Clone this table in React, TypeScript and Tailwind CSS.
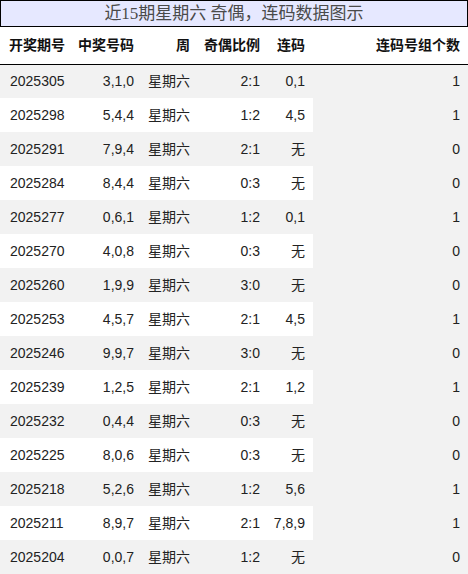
import React from 'react';

type Row = [string, string, string, string, string, string];

const rows: Row[] = [
  ['2025305', '3,1,0', '星期六', '2:1', '0,1', '1'],
  ['2025298', '5,4,4', '星期六', '1:2', '4,5', '1'],
  ['2025291', '7,9,4', '星期六', '2:1', '无', '0'],
  ['2025284', '8,4,4', '星期六', '0:3', '无', '0'],
  ['2025277', '0,6,1', '星期六', '1:2', '0,1', '1'],
  ['2025270', '4,0,8', '星期六', '0:3', '无', '0'],
  ['2025260', '1,9,9', '星期六', '3:0', '无', '0'],
  ['2025253', '4,5,7', '星期六', '2:1', '4,5', '1'],
  ['2025246', '9,9,7', '星期六', '3:0', '无', '0'],
  ['2025239', '1,2,5', '星期六', '2:1', '1,2', '1'],
  ['2025232', '0,4,4', '星期六', '0:3', '无', '0'],
  ['2025225', '8,0,6', '星期六', '0:3', '无', '0'],
  ['2025218', '5,2,6', '星期六', '1:2', '5,6', '1'],
  ['2025211', '8,9,7', '星期六', '2:1', '7,8,9', '1'],
  ['2025204', '0,0,7', '星期六', '1:2', '无', '0'],
];

const headers = ['开奖期号', '中奖号码', '周', '奇偶比例', '连码', '连码号组个数'];

export default function App() {
  return (
    <div className="w-[468px] h-[574px] bg-white overflow-hidden font-['Liberation_Sans','Noto_Sans_CJK_SC',sans-serif] text-[14px] text-[#222]">
      {/* caption */}
      <div className="h-[27px] border border-black bg-[#e6e8ff] flex items-center justify-center text-[17px] text-[#4a4a4a] font-['Liberation_Serif','Noto_Sans_CJK_SC',serif] leading-none">
        近15期星期六 奇偶，连码数据图示
      </div>
      <table className="w-[468px] table-fixed border-collapse whitespace-nowrap">
        <colgroup>
          <col className="w-[72px]" />
          <col className="w-[70px]" />
          <col className="w-[56px]" />
          <col className="w-[70px]" />
          <col className="w-[45px]" />
          <col className="w-[155px]" />
        </colgroup>
        <thead>
          <tr className="h-[37px] border-b border-black">
            {headers.map((h, i) => (
              <th
                key={h}
                className={`font-bold text-[14px] text-[#111] p-0 ${i === 0 ? 'text-left pl-[9px]' : 'text-right pr-2'}`}
              >
                {h}
              </th>
            ))}
          </tr>
        </thead>
        <tbody>
          {rows.map((r, ri) => (
            <tr key={r[0]} className={`h-[34px] ${ri % 2 === 0 ? 'bg-[#f2f2f2]' : 'bg-white'}`}>
              {r.map((c, ci) => (
                <td
                  key={ci}
                  className={`p-0 ${ci === 0 ? 'text-left pl-[10px]' : 'text-right pr-2'} ${ci === 5 ? 'bg-[#f2f2f2]' : ''}`}
                >
                  {c}
                </td>
              ))}
            </tr>
          ))}
        </tbody>
      </table>
    </div>
  );
}
